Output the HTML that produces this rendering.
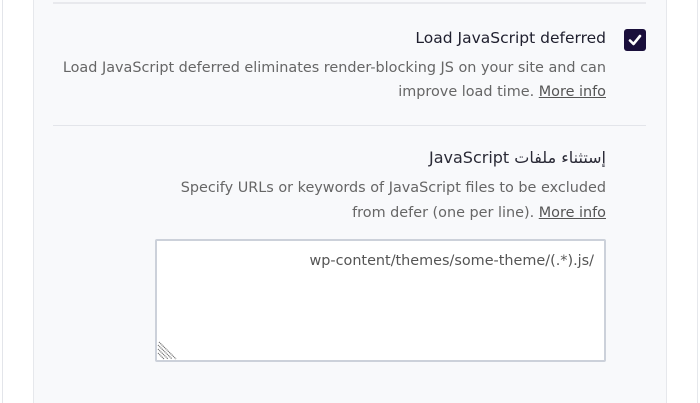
<!DOCTYPE html>
<html><head><meta charset="utf-8"><style>
*{margin:0;padding:0;box-sizing:border-box}
body{width:700px;height:403px;background:#fff;position:relative;overflow:hidden;font-family:"DejaVu Sans","Liberation Sans",sans-serif}
.a{position:absolute;white-space:nowrap}
.r{text-align:right}
.d{color:#666;font-size:14.4px}
u{color:#555;text-decoration:underline}
</style></head><body>
<div class="a" style="left:2px;top:0;width:1px;height:403px;background:#e3e5ea"></div>
<div class="a" style="left:33px;top:0;width:634px;height:403px;background:#f8f9fb;border-left:1px solid #e6e8ec;border-right:1px solid #e6e8ec"></div>
<div class="a" style="left:697px;top:0;width:1px;height:403px;background:#e6e8ec"></div>
<div class="a" style="left:53px;top:2px;width:593px;height:2px;background:#e8e9ed"></div>
<div class="a" style="left:53px;top:125px;width:593px;height:1px;background:#e3e5ea"></div>
<div class="a r" style="right:94px;top:29px;font-size:15.5px;color:#1f1f2e">Load JavaScript deferred</div>
<div class="a" style="left:624px;top:29px;width:22px;height:22px;background:#1a0f3b;border-radius:3px">
<svg width="22" height="22" viewBox="0 0 22 22"><path d="M6 11.5l3.5 3.5L16 7" stroke="#fff" stroke-width="2.6" fill="none" stroke-linecap="round" stroke-linejoin="round"/></svg></div>
<div class="a r d" style="right:94px;top:60px">Load JavaScript deferred eliminates render-blocking JS on your site and can</div>
<div class="a r d" style="right:94px;top:84px">improve load time. <u>More info</u></div>
<div class="a r" dir="rtl" style="right:94px;top:148px;font-size:16px;color:#2a2a36">إستثناء ملفات JavaScript</div>
<div class="a r d" style="right:94px;top:180px">Specify URLs or keywords of JavaScript files to be excluded</div>
<div class="a r d" style="right:94px;top:205px">from defer (one per line). <u>More info</u></div>
<div class="a" style="left:155px;top:239px;width:451px;height:123px;background:#fff;border:2px solid #ccd1da;border-radius:2px"></div>
<div class="a r d" style="right:106px;top:253px;color:#555">wp-content/themes/some-theme/(.*).js/</div>
<svg class="a" style="left:157px;top:341px" width="20" height="19" viewBox="0 0 20 19"><path d="M1 8l10 10M1 12l6 6M1 4l14 14M2 1l17 17" stroke="#777" stroke-width="1.2" stroke-dasharray="1.2 0.6"/></svg>
</body></html>
